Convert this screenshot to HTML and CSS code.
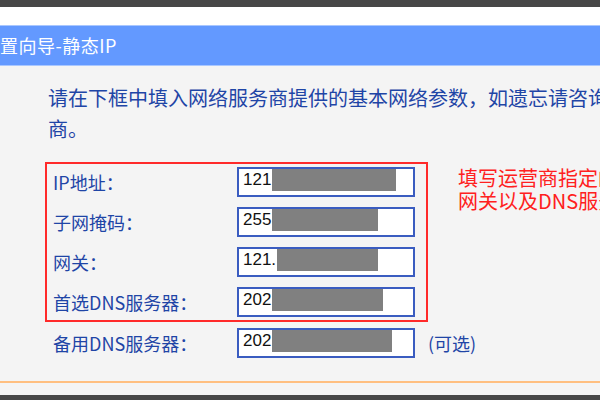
FILE: index.html
```html
<!DOCTYPE html>
<html lang="zh-CN">
<head>
  <meta charset="UTF-8">
  <title>设置向导-静态IP</title>
  <link rel="stylesheet" href="styles.css">
</head>
<body>
  <div class="topbar"></div>
  <div class="gap-white"></div>
  <div class="title-bar">置向导-静态IP</div>

  <div class="main">
    <p class="intro">请在下框中填入网络服务商提供的基本网络参数，如遗忘请咨询<br>商。</p>

    <div class="form-area">
      <div class="mark-box">
        <div class="row">
          <span class="label">IP地址：</span>
          <div class="field"><span class="val">121</span><span class="mask mask-ip"></span></div>
        </div>
        <div class="row">
          <span class="label">子网掩码：</span>
          <div class="field"><span class="val">255</span><span class="mask mask-sub"></span></div>
        </div>
        <div class="row">
          <span class="label">网关：</span>
          <div class="field"><span class="val">121.</span><span class="mask mask-gw"></span></div>
        </div>
        <div class="row">
          <span class="label">首选DNS服务器：</span>
          <div class="field"><span class="val">202</span><span class="mask mask-dns1"></span></div>
        </div>
      </div>
      <div class="note">填写运营商指定的IP地址、子网掩码、<br>网关以及DNS服务器</div>
    </div>

    <div class="row row-extra">
      <span class="label">备用DNS服务器：</span>
      <div class="field"><span class="val">202</span><span class="mask mask-dns2"></span></div>
      <span class="optional">(可选)</span>
    </div>
  </div>

  <div class="footer-line"></div>
  <div class="footer-space"></div>
  <div class="bottombar"></div>
</body>
</html>
```

FILE: styles.css
```css
body {
  margin: 0;
  background-color: #f4f4f4;
  font-family: "Noto Sans CJK SC", "Liberation Sans", sans-serif;
  overflow: hidden;
  width: 600px;
  height: 400px;
}

.topbar {
  height: 7px;
  background-color: #474747;
}

.gap-white {
  height: 18px;
  background-color: #fff;
}

.title-bar {
  height: 39px;
  background-color: #6399ff;
  border-top: 1px solid #a9c7ff;
  border-bottom: 1px solid #a9c7ff;
  color: #fff;
  font-size: 18px;
  line-height: 39px;
  white-space: nowrap;
  letter-spacing: 0.5px;
}

.main {
  height: 315px;
  padding-top: 16px;
  box-sizing: border-box;
  white-space: nowrap;
  overflow: hidden;
}

.intro {
  margin: 0 0 18px 48px;
  font-size: 20px;
  line-height: 31px;
  color: #1f45a6;
  overflow: hidden;
}

.form-area {
  display: flex;
  align-items: flex-start;
}

.mark-box {
  flex-shrink: 0;
  margin-left: 45px;
  width: 383px;
  box-sizing: border-box;
  border: 2px solid #ff2a2a;
  padding: 3px 0 3px 6px;
  display: flex;
  flex-direction: column;
  gap: 10px;
}

.row {
  display: flex;
  align-items: center;
  height: 30px;
}

.label {
  flex-shrink: 0;
  width: 184px;
  font-size: 18px;
  color: #1f45a6;
}

.field {
  flex-shrink: 0;
  width: 178px;
  height: 30px;
  box-sizing: border-box;
  border: 2px solid #3a5cc0;
  background-color: #fff;
  padding-left: 4px;
  display: flex;
  align-items: center;
}

.val {
  font-family: "Liberation Sans", sans-serif;
  font-size: 17px;
  color: #111;
  margin-top: -4px;
}

.mask {
  flex-shrink: 0;
  align-self: flex-start;
  height: 22px;
  background-color: #808080;
  margin-left: 1px;
}

.mask-ip { width: 124px; }
.mask-sub { width: 106px; }
.mask-gw { width: 101px; }
.mask-dns1 { width: 111px; }
.mask-dns2 { width: 120px; }

.note {
  margin: 4px 0 0 30px;
  font-size: 20px;
  line-height: 23px;
  color: #ff2020;
  overflow: hidden;
}

.row-extra {
  margin: 6px 0 0 53px;
}

.optional {
  margin-left: 13px;
  font-size: 18px;
  color: #1f45a6;
}

.footer-line {
  height: 2px;
  background-color: #ffbf80;
}

.footer-space {
  height: 12px;
  background-color: #f4f4f4;
}

.bottombar {
  height: 5px;
  background-color: #474747;
}
```
